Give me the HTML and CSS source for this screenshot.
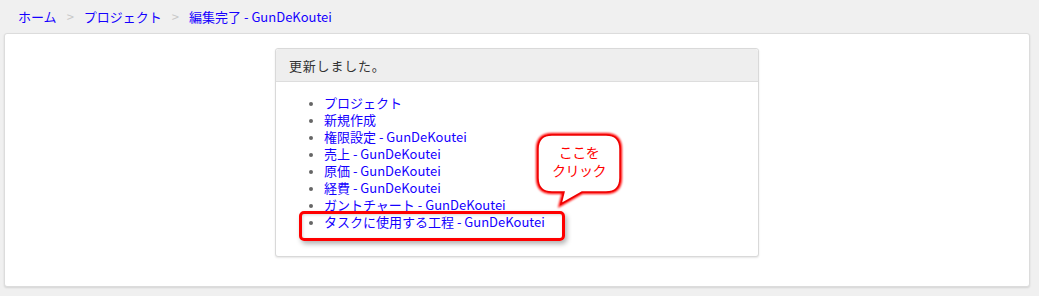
FILE: index.html
```html
<!DOCTYPE html>
<html lang="ja">
<head>
<meta charset="utf-8">
<link rel="stylesheet" href="styles.css">
</head>
<body>
<nav class="crumbs">
  <a href="#">ホーム</a><span class="sep">&gt;</span><a href="#">プロジェクト</a><span class="sep">&gt;</span><span class="current">編集完了 - GunDeKoutei</span>
</nav>
<main class="card">
  <section class="panel">
    <header class="panel-head">更新しました。</header>
    <div class="panel-body">
      <ul class="links">
        <li><a href="#">プロジェクト</a></li>
        <li><a href="#">新規作成</a></li>
        <li><a href="#">権限設定 - GunDeKoutei</a></li>
        <li><a href="#">売上 - GunDeKoutei</a></li>
        <li><a href="#">原価 - GunDeKoutei</a></li>
        <li><a href="#">経費 - GunDeKoutei</a></li>
        <li><a href="#">ガントチャート - GunDeKoutei</a></li>
        <li><a href="#">タスクに使用する工程 - GunDeKoutei</a></li>
      </ul>
    </div>
    <div class="highlight"></div>
    <div class="callout">
      <svg class="bubble" width="100" height="85" viewBox="0 0 100 85">
        <defs>
          <filter id="glow" x="-20%" y="-20%" width="140%" height="140%">
            <feGaussianBlur stdDeviation="1.2"/>
          </filter>
        </defs>
        <path d="M22,8 H76 Q90,8 90,22 V51 Q90,65 76,65 H52 L31,77 L34,65 H22 Q8,65 8,51 V22 Q8,8 22,8 Z" fill="none" stroke="#ff0000" stroke-width="4" filter="url(#glow)"/>
        <path d="M22,8 H76 Q90,8 90,22 V51 Q90,65 76,65 H52 L31,77 L34,65 H22 Q8,65 8,51 V22 Q8,8 22,8 Z" fill="#ffffff" stroke="#ee0000" stroke-width="1.5"/>
      </svg>
      <div class="callout-text"><span class="line">ここを</span><span class="line">クリック</span></div>
    </div>
  </section>
</main>
</body>
</html>
```

FILE: styles.css
```css
html, body {
  margin: 0;
  padding: 0;
}
body {
  background: #f0f0f0;
  font-family: "Noto Sans CJK JP", "Noto Sans", sans-serif;
  font-size: 13px;
  color: #333;
  width: 1039px;
  height: 296px;
  overflow: hidden;
}
a {
  color: #1500ff;
  text-decoration: none;
}
.crumbs {
  padding: 6px 18px 0;
  height: 27px;
  line-height: 18px;
  font-size: 13px;
  display: flex;
  align-items: center;
  box-sizing: border-box;
}
.crumbs .sep {
  color: #c8c8c8;
  margin: 0 10px;
}
.crumbs .current {
  color: #1500ff;
}
.card {
  margin: 6px 9px 0 4px;
  background: #fff;
  border: 1px solid #dcdcdc;
  border-radius: 3px;
  box-shadow: 0 1px 2px rgba(0,0,0,0.12);
  padding: 14px 0 31px;
  display: flex;
  justify-content: center;
  height: 254px;
  box-sizing: border-box;
}
.panel {
  position: relative;
  width: 484px;
  height: 209px;
  box-sizing: border-box;
  border: 1px solid #d9d9d9;
  border-radius: 3px;
  box-shadow: 0 1px 2px rgba(0,0,0,0.1);
  background: #fff;
}
.panel-head {
  background: #eeeeee;
  border-bottom: 1px solid #dddddd;
  height: 33px;
  line-height: 33px;
  padding: 0 13px;
  box-sizing: border-box;
  font-size: 13px;
  letter-spacing: 0.8px;
  color: #333;
  border-radius: 3px 3px 0 0;
}
.panel-body {
  padding: 12px 15px 0;
}
.links {
  margin: 0;
  padding-left: 33px;
  line-height: 17px;
  font-size: 13px;
}
.links li::marker {
  color: #666;
  font-size: 10px;
}
.highlight {
  position: absolute;
  left: 23px;
  top: 162px;
  width: 266px;
  height: 30px;
  box-sizing: border-box;
  border: 3px solid #ff0000;
  border-radius: 5px;
  box-shadow: 2px 3px 5px rgba(0,0,0,0.3), inset 1px 1px 3px rgba(0,0,0,0.15);
}
.callout {
  position: absolute;
  left: 254px;
  top: 78px;
  width: 100px;
  height: 85px;
}
.bubble {
  display: block;
}
.callout-text {
  position: absolute;
  left: 8px;
  top: 15px;
  width: 82px;
  display: flex;
  flex-direction: column;
  align-items: center;
  color: #ff0000;
  font-size: 14px;
  line-height: 21px;
  letter-spacing: -0.5px;
}
.callout-text .line {
  display: block;
  height: 21px;
  margin-bottom: -3px;
}
```
